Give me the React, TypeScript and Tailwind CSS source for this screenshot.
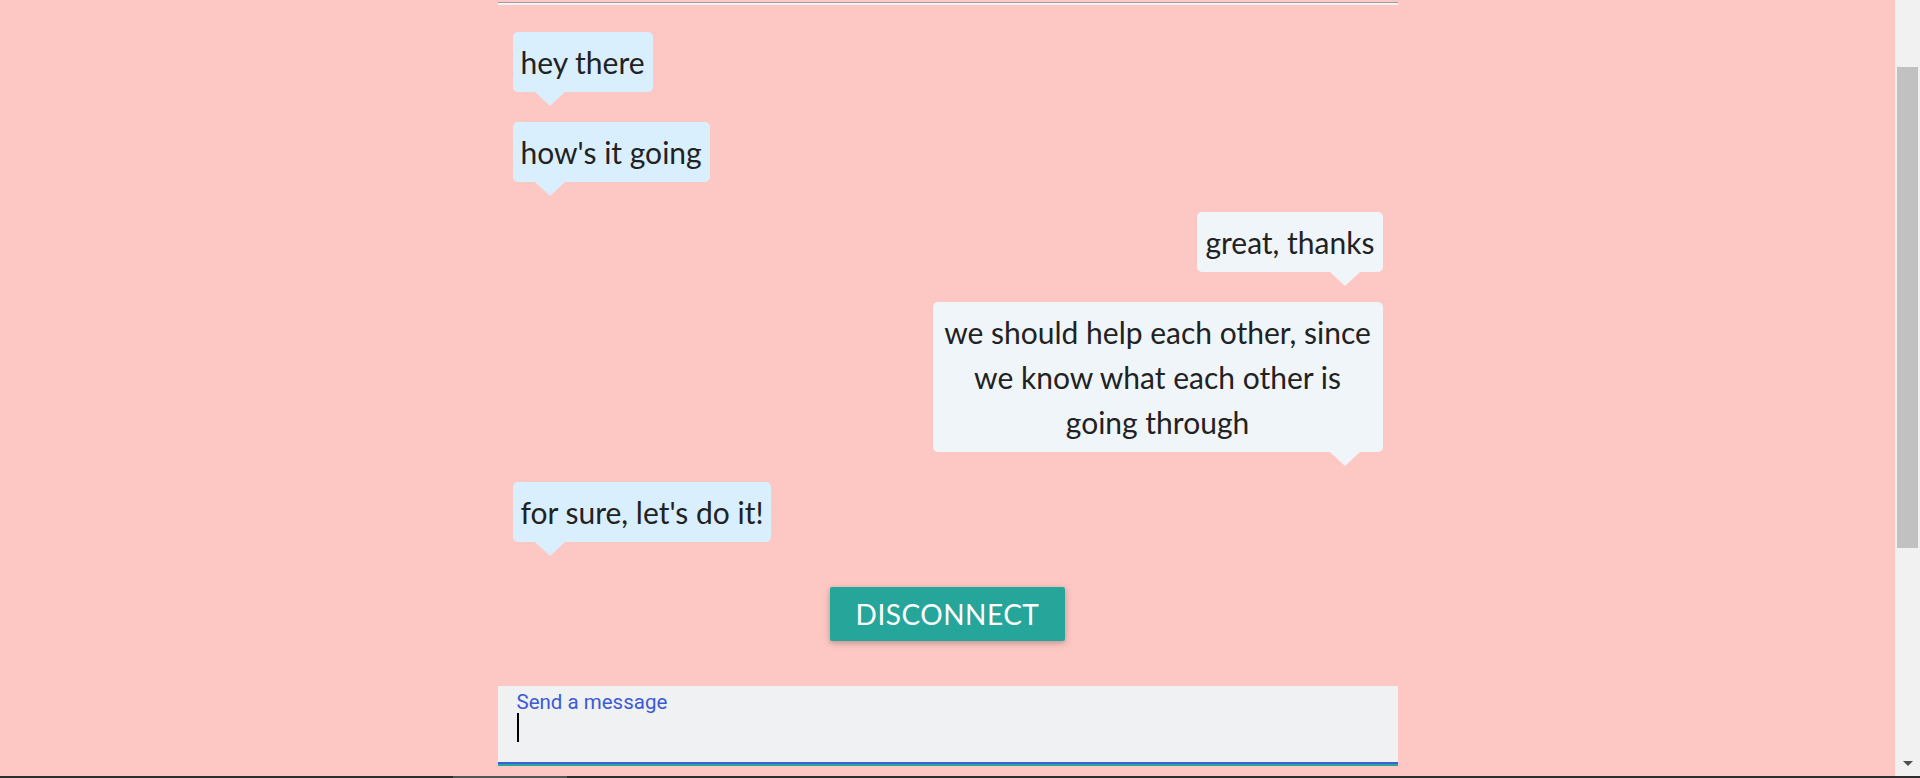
const messages = [
  { id: 1, text: "hey there", mine: false },
  { id: 2, text: "how's it going", mine: false },
  { id: 3, text: "great, thanks", mine: true },
  { id: 4, text: "we should help each other, since we know what each other is going through", mine: true },
  { id: 5, text: "for sure, let's do it!", mine: false },
];

function Bubble({ text, mine }: { text: string; mine: boolean }) {
  return (
    <div className={mine ? "flex justify-end" : "flex justify-start"}>
      <div
        className={
          "relative max-w-[450px] rounded-[5px] px-2 py-[7.5px] text-center text-[30px] leading-[45px] text-[#222222] " +
          (mine ? "bg-[#f0f5f9]" : "bg-[#d9effe]")
        }
      >
        {text}
        <span
          className={
            "absolute top-full h-0 w-0 border-x-[15px] border-t-[14px] border-x-transparent " +
            (mine ? "right-[23px] border-t-[#f0f5f9]" : "left-[22px] border-t-[#d9effe]")
          }
        />
      </div>
    </div>
  );
}

export default function App() {
  return (
    <div className="flex h-[778px] w-full flex-col overflow-hidden bg-[#fdc8c4] font-['Lato',sans-serif]">
      <div className="flex min-h-0 flex-1">
        <div className="flex-1">
          <div className="mx-auto w-[900px]">
            <div className="mt-[2px] h-[3px] border-t border-[#9e9e9e] bg-[#f4f4f4]" />

            <div className="flex flex-col gap-[30px] px-[15px] pt-[27px]">
              {messages.map((m) => (
                <Bubble key={m.id} text={m.text} mine={m.mine} />
              ))}
            </div>

            <div className="mt-[45px] flex justify-center">
              <button className="flex h-[54px] w-[235px] items-center justify-center rounded-[2px] bg-[#26a69a] text-[28px] uppercase tracking-[0.5px] text-white shadow-[0_2px_5px_rgba(0,0,0,0.16),0_2px_10px_rgba(0,0,0,0.12)]">
                Disconnect
              </button>
            </div>

            <div className="mt-[45px] h-[80px] border-b-2 border-[#26a69a] bg-[#f0f1f3] font-['Roboto',sans-serif]">
              <div className="flex h-full flex-col border-b-2 border-[#3b5fd9] pl-[19px] pt-[4px]">
                <span className="text-[20.5px] leading-[24px] text-[#3b5bd6]">Send a message</span>
                <span className="mt-[-1px] h-[29px] w-[2px] bg-black" />
              </div>
            </div>
          </div>
        </div>

        <div className="flex w-[25px] flex-col bg-[#f1f1f1] pt-[67px]">
          <div className="mx-[2px] h-[481px] bg-[#c1c1c1]" />
          <div className="mt-auto mb-[10px] flex justify-center">
            <span className="h-0 w-0 border-x-[5px] border-t-[5px] border-x-transparent border-t-[#505050]" />
          </div>
        </div>
      </div>
      <div className="flex h-[2px] bg-[#2e2e2e]">
        <div className="ml-[453px] w-[114px] bg-[#555555]" />
      </div>
    </div>
  );
}
